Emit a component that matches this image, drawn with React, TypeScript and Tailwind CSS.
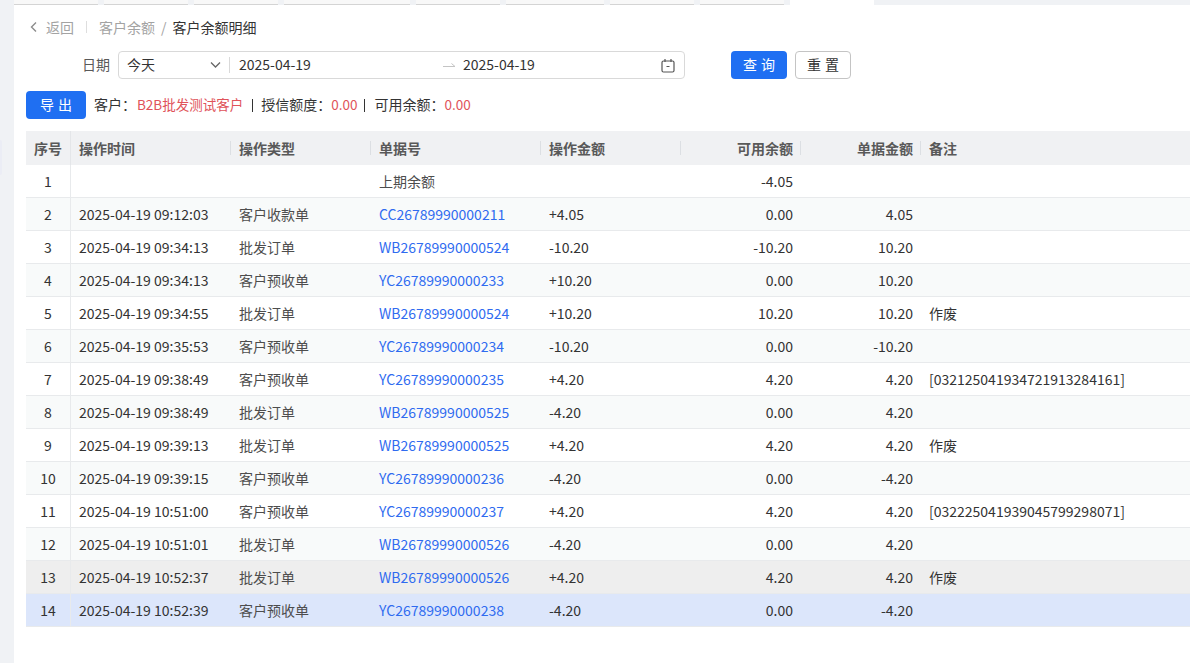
const rows = [
  { no: 1, time: '', type: '', bill: '上期余额', link: false, amount: '', balance: '-4.05', billAmount: '', note: '' },
  { no: 2, time: '2025-04-19 09:12:03', type: '客户收款单', bill: 'CC26789990000211', link: true, amount: '+4.05', balance: '0.00', billAmount: '4.05', note: '' },
  { no: 3, time: '2025-04-19 09:34:13', type: '批发订单', bill: 'WB26789990000524', link: true, amount: '-10.20', balance: '-10.20', billAmount: '10.20', note: '' },
  { no: 4, time: '2025-04-19 09:34:13', type: '客户预收单', bill: 'YC26789990000233', link: true, amount: '+10.20', balance: '0.00', billAmount: '10.20', note: '' },
  { no: 5, time: '2025-04-19 09:34:55', type: '批发订单', bill: 'WB26789990000524', link: true, amount: '+10.20', balance: '10.20', billAmount: '10.20', note: '作废' },
  { no: 6, time: '2025-04-19 09:35:53', type: '客户预收单', bill: 'YC26789990000234', link: true, amount: '-10.20', balance: '0.00', billAmount: '-10.20', note: '' },
  { no: 7, time: '2025-04-19 09:38:49', type: '客户预收单', bill: 'YC26789990000235', link: true, amount: '+4.20', balance: '4.20', billAmount: '4.20', note: '[032125041934721913284161]' },
  { no: 8, time: '2025-04-19 09:38:49', type: '批发订单', bill: 'WB26789990000525', link: true, amount: '-4.20', balance: '0.00', billAmount: '4.20', note: '' },
  { no: 9, time: '2025-04-19 09:39:13', type: '批发订单', bill: 'WB26789990000525', link: true, amount: '+4.20', balance: '4.20', billAmount: '4.20', note: '作废' },
  { no: 10, time: '2025-04-19 09:39:15', type: '客户预收单', bill: 'YC26789990000236', link: true, amount: '-4.20', balance: '0.00', billAmount: '-4.20', note: '' },
  { no: 11, time: '2025-04-19 10:51:00', type: '客户预收单', bill: 'YC26789990000237', link: true, amount: '+4.20', balance: '4.20', billAmount: '4.20', note: '[032225041939045799298071]' },
  { no: 12, time: '2025-04-19 10:51:01', type: '批发订单', bill: 'WB26789990000526', link: true, amount: '-4.20', balance: '0.00', billAmount: '4.20', note: '' },
  { no: 13, time: '2025-04-19 10:52:37', type: '批发订单', bill: 'WB26789990000526', link: true, amount: '+4.20', balance: '4.20', billAmount: '4.20', note: '作废' },
  { no: 14, time: '2025-04-19 10:52:39', type: '客户预收单', bill: 'YC26789990000238', link: true, amount: '-4.20', balance: '0.00', billAmount: '-4.20', note: '' },
]

const tabs = [84, 84, 84, 126, 84, 98, 84, 84]

const rowBg = (no: number) => {
  if (no === 13) return 'bg-[#eeeeee]'
  if (no === 14) return 'bg-[#dce6fb]'
  return no % 2 === 0 ? 'bg-[#f8fafa]' : 'bg-white'
}

const cols = 'grid grid-cols-[45px_160px_140px_170px_140px_120px_120px_1fr]'

const HeadCell = ({ label, right, sep = true }: { label: string; right?: boolean; sep?: boolean }) => (
  <div className={`relative flex items-center px-2 ${right ? 'justify-end' : ''}`}>
    {label}
    {sep && <span className="absolute right-0 top-[10px] h-[14px] w-px bg-[#dcdfe3]" />}
  </div>
)

export default function App() {
  return (
    <div className="relative flex h-[663px] w-[1190px] overflow-hidden bg-[#f0f2f5] font-['Noto_Sans_CJK_SC','Noto_Sans',sans-serif] text-[14px] text-[#333]">
      <div className="absolute left-0 top-[140px] h-[35px] w-[2px] rounded-r-[2px] bg-[#ebedf5]" />
      <div className="w-[14px] shrink-0" />
      <div className="flex min-w-0 flex-1 flex-col">
        <div className="flex h-[5px] shrink-0 items-start bg-[#f0f2f5]">
          {tabs.map((w, i) => (
            <div key={i} style={{ width: w }} className="mr-[6px] h-[5px] border-b border-[#d4d4d4] bg-[#f8f8f8]" />
          ))}
          <div className="h-[5px] w-[84px] bg-white" />
        </div>
        <div className="flex-1 bg-white pl-3">
          <div className="flex h-[46px] items-center pb-[2px] pl-[3px]">
            <svg width="10" height="12" viewBox="0 0 10 12" fill="none" stroke="#8c8c8c" strokeWidth="1.4" className="mr-[7px]">
              <path d="M7 1.5 2.5 6 7 10.5" />
            </svg>
            <span className="text-[#a3a3a3]">返回</span>
            <span className="mx-3 h-[12px] w-px bg-[#dedede]" />
            <span className="text-[#a3a3a3]">客户余额</span>
            <span className="mx-[6px] text-[#a3a3a3]">/</span>
            <span className="text-[#333]">客户余额明细</span>
          </div>

          <div className="flex h-[28px] items-center">
            <span className="ml-[56px] mr-[8px] pb-[2px] text-[#595959]">日期</span>
            <div className="flex h-[28px] w-[567px] items-center rounded-[4px] border border-[#d9d9d9] pl-2">
              <span className="w-[83px] pb-[2px]">今天</span>
              <svg width="11" height="8" viewBox="0 0 11 8" fill="none" stroke="#666" strokeWidth="1.3" className="mr-[8px]">
                <path d="M1 1.5 5.5 6 10 1.5" />
              </svg>
              <span className="h-[16px] w-px bg-[#d9d9d9]" />
              <span className="ml-[9px] w-[204px] pb-[2px]">2025-04-19</span>
              <span className="w-[20px]">
                <svg width="13" height="6" viewBox="0 0 13 6" fill="none" stroke="#c4c4c4" strokeWidth="1">
                  <path d="M0 4.5h12L8.5 1.5" />
                </svg>
              </span>
              <span className="w-[198px] pb-[2px]">2025-04-19</span>
              <svg width="14" height="15" viewBox="0 0 14 15" fill="none" stroke="#555" strokeWidth="1.2">
                <rect x="1" y="3" width="12" height="11" rx="1.5" />
                <path d="M4 1v3M10 1v3M5.5 8.5h3" />
              </svg>
            </div>
            <button className="ml-[46px] h-[28px] w-[56px] rounded-[4px] bg-[#1f6ff2] pb-[2px] text-white">
              <span className="mr-1">查</span>询
            </button>
            <button className="ml-[8px] h-[28px] w-[56px] rounded-[4px] border border-[#c4c4c4] pb-[2px] text-[#333]">
              <span className="mr-1">重</span>置
            </button>
          </div>

          <div className="mt-[12px] flex h-[28px] items-center">
            <button className="h-[28px] w-[60px] rounded-[4px] bg-[#1f6ff2] pb-[2px] text-white">
              <span className="mr-1">导</span>出
            </button>
            <span className="ml-2 pb-[2px]">客户：</span>
            <span className="ml-[1px] pb-[2px] text-[13.5px] text-[#e0535a]">B2B批发测试客户</span>
            <span className="ml-[9px] mr-[8px] h-[13px] w-px bg-[#333]" />
            <span className="pb-[2px]">授信额度：</span>
            <span className="pb-[2px] text-[13.5px] text-[#e0535a]">0.00</span>
            <span className="ml-[7px] mr-[9px] h-[13px] w-px bg-[#333]" />
            <span className="pb-[2px]">可用余额：</span>
            <span className="pb-[2px] text-[13.5px] text-[#e0535a]">0.00</span>
          </div>

          <div className="mt-[12px]">
            <div className={`${cols} h-[34px] bg-[#f0f1f3] font-bold text-[#595959]`}>
              <div className="flex items-center justify-center border-r border-[#e4e6e9]">序号</div>
              <HeadCell label="操作时间" />
              <HeadCell label="操作类型" />
              <HeadCell label="单据号" />
              <HeadCell label="操作金额" />
              <HeadCell label="可用余额" right />
              <HeadCell label="单据金额" right />
              <HeadCell label="备注" sep={false} />
            </div>
            {rows.map(r => (
              <div key={r.no} className={`${cols} h-[33px] items-stretch border-b border-[#e8eaec] ${rowBg(r.no)}`}>
                <div className="flex items-center justify-center border-r border-[#e8eaec]">{r.no}</div>
                <div className="flex items-center px-2">{r.time}</div>
                <div className="flex items-center px-2 text-[#4d4d4d]">{r.type}</div>
                <div className={`flex items-center px-2 ${r.link ? 'text-[#2f6bf0]' : 'text-[#4d4d4d]'}`}>{r.bill}</div>
                <div className="flex items-center px-2">{r.amount}</div>
                <div className="flex items-center justify-end px-2">{r.balance}</div>
                <div className="flex items-center justify-end px-2">{r.billAmount}</div>
                <div className="flex items-center px-2">{r.note}</div>
              </div>
            ))}
          </div>
        </div>
      </div>
    </div>
  )
}
